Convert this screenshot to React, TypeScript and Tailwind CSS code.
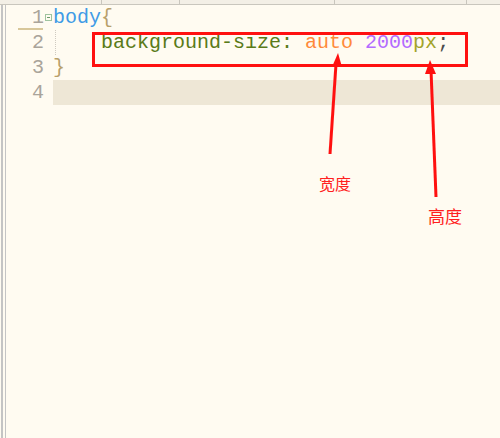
import React from 'react';

const lines = [
  { n: 1, parts: [{ t: 'body', c: 'text-[#3f9be6]' }, { t: '{', c: 'text-[#b8a06a]' }] },
  {
    n: 2,
    parts: [
      { t: '    ', c: '' },
      { t: 'background-size: ', c: 'text-[#5a7a18]' },
      { t: 'auto', c: 'text-[#ff8a3a]' },
      { t: ' ', c: '' },
      { t: '2000', c: 'text-[#b36bff]' },
      { t: 'px', c: 'text-[#a3a32a]' },
      { t: ';', c: 'text-[#4a4a4a]' },
    ],
  },
  { n: 3, parts: [{ t: '}', c: 'text-[#b8a06a]' }] },
  { n: 4, parts: [] },
];

const App = () => {
  return (
    <div className="relative w-[500px] h-[438px] overflow-hidden bg-[#fffbf1] font-['Liberation_Mono',monospace]">
      {/* tab strip at the top */}
      <div className="flex h-[5px] border-b border-[#c9c6bd] bg-[#f3efe6]">
        <div className="w-[102px] border-r border-[#c9c6bd]" />
        <div className="w-[78px] border-r border-[#c9c6bd]" />
        <div className="w-[155px] border-r border-[#c9c6bd]" />
        <div className="w-[132px] border-r border-[#c9c6bd]" />
        <div className="flex-1" />
      </div>

      <div className="flex h-full">
        {/* double gutter lines */}
        <div className="flex w-[18px] shrink-0">
          <div className="ml-[1px] w-[2px] h-full bg-[#c4c4c4]" />
          <div className="ml-[2px] w-[1px] h-full bg-[#c4c4c4]" />
        </div>

        <div className="flex-1">
          {lines.map((line) => (
            <div key={line.n} className="flex h-[25px] items-center">
              <div className="relative w-[26px] text-right text-[20px] leading-[25px] text-[#aaa49a]">
                {line.n}
                {line.n === 1 && <div className="absolute left-0 bottom-0 w-[25px] h-[2px] bg-[#d8c79a]" />}
              </div>
              <div className="w-[9px] flex justify-center">
                {line.n === 1 && (
                  <div className="w-[7px] h-[7px] border border-[#9fc49f] flex items-center justify-center">
                    <div className="w-[3px] h-px bg-[#6a9a6a]" />
                  </div>
                )}
              </div>
              <div
                className={`relative flex-1 h-[25px] whitespace-pre text-[20px] leading-[25px] ${
                  line.n === 4 ? 'bg-[#eee7d6]' : ''
                }`}
              >
                {line.n === 2 && (
                  <div className="absolute left-[2px] top-0 h-[25px] border-l border-dotted border-[#cfcac0]" />
                )}
                {line.parts.map((p, i) => (
                  <span key={i} className={p.c}>
                    {p.t}
                  </span>
                ))}
              </div>
            </div>
          ))}
        </div>
      </div>

      {/* annotation: red box around line 2 */}
      <div className="absolute left-[92px] top-[32px] w-[376px] h-[35px] border-[3px] border-[#ff1010]" />

      {/* annotation arrows */}
      <svg className="absolute left-0 top-0" width="500" height="438">
        <line x1="330" y1="154" x2="336" y2="64" stroke="#ff1010" strokeWidth="3" />
        <polygon points="338,53 332,67 342,67" fill="#ff1010" />
        <line x1="436" y1="197" x2="431" y2="70" stroke="#ff1010" strokeWidth="3" />
        <polygon points="430,60 425,74 436,74" fill="#ff1010" />
      </svg>

      <div className="absolute left-[319px] top-[173px] text-[16px] leading-[20px] text-[#ff2020] font-['Noto_Sans_CJK_SC',sans-serif]">
        宽度
      </div>
      <div className="absolute left-[428px] top-[206px] text-[17px] leading-[20px] text-[#ff2020] font-['Noto_Sans_CJK_SC',sans-serif]">
        高度
      </div>
    </div>
  );
};

export default App;
